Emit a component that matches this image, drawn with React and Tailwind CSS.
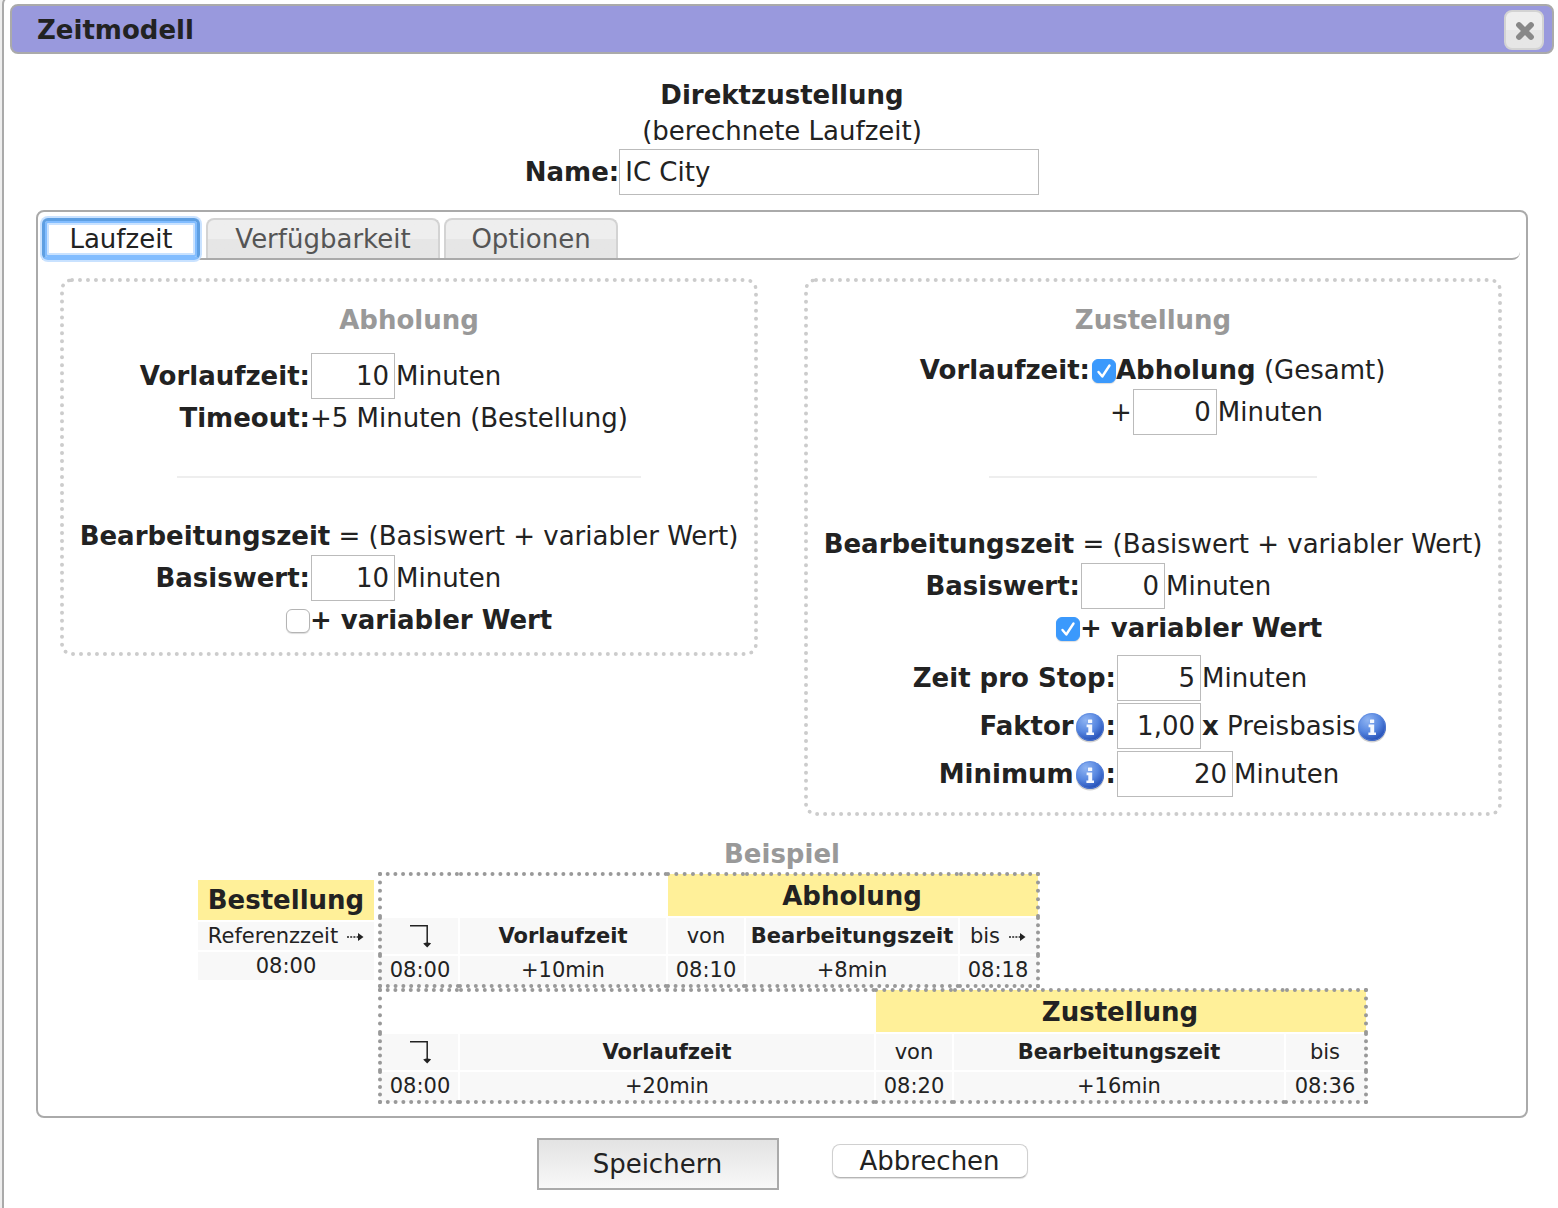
import { useId, useState } from 'react';

function InfoIcon({ label }) {
  const id = useId();
  return (
    <svg role="img" aria-label={label} viewBox="0 0 32 32" className="mt-0.5 inline-block size-8 shrink-0">
      <defs>
        <radialGradient id={id} cx="35%" cy="25%" r="80%">
          <stop offset="0" stopColor="#8fb4f2" />
          <stop offset="0.55" stopColor="#5686e0" />
          <stop offset="1" stopColor="#1f48b0" />
        </radialGradient>
      </defs>
      <ellipse cx="16" cy="18.5" rx="14" ry="13" fill="#000" opacity="0.18" />
      <circle cx="16" cy="16" r="14" fill={`url(#${id})`} />
      <circle cx="16" cy="16" r="13.4" fill="none" stroke="#5b87dd" strokeWidth="1" opacity="0.6" />
      <rect x="14" y="8.4" width="4.2" height="3.6" rx="0.6" fill="#f4f8ff" />
      <path d="M12.6 13.6h5.6v7.8h1.8v2.6h-7.6v-2.6h1.9v-5.2h-1.7z" fill="#f4f8ff" />
    </svg>
  );
}

function DashedArrow() {
  return (
    <svg aria-hidden="true" viewBox="0 0 18 12" className="ml-2 inline-block h-3 w-[18px]">
      <path d="M1 6h11" stroke="#222" strokeWidth="1.6" strokeDasharray="2 1.2" />
      <path d="M12 2l5.5 4-5.5 4z" fill="#222" />
    </svg>
  );
}

function ElbowArrow() {
  return (
    <svg aria-hidden="true" viewBox="0 0 22 24" className="mx-auto block h-6 w-[22px]">
      <path d="M1 1.7h17.2V19" fill="none" stroke="#222" strokeWidth="1.5" />
      <path d="M14.2 19.4q4-1.6 8 0L18.2 23.6z" fill="#222" />
    </svg>
  );
}

function Field({ label, value, className = 'w-[84px]' }) {
  return (
    <input
      type="text"
      aria-label={label}
      defaultValue={value}
      className={`mx-px h-[46px] shrink-0 border border-[#bbb] bg-white px-[5px] text-right text-[#222] ${className}`}
    />
  );
}

function Checkbox({ id, defaultChecked }) {
  return (
    <span className="relative mt-0.5 inline-block size-6 shrink-0">
      <input
        id={id}
        type="checkbox"
        defaultChecked={defaultChecked}
        className="peer block size-6 appearance-none rounded-[6px] border border-[#b4b4b4] bg-white shadow-[0_1px_1px_#ddd] checked:border-[#3b99fc] checked:bg-[#3b99fc]"
      />
      <svg viewBox="0 0 24 24" aria-hidden="true" className="pointer-events-none absolute inset-0 hidden size-6 peer-checked:block">
        <path d="M6.5 13l3.8 4.5L17.5 6.5" fill="none" stroke="#fff" strokeWidth="2.4" strokeLinecap="round" strokeLinejoin="round" />
      </svg>
    </span>
  );
}

function Group({ title, children }) {
  return (
    <section className="flex-1 rounded-xl border-4 border-dotted border-[#ccc] pt-5 whitespace-nowrap">
      <h2 className="text-center font-bold text-[#999]">{title}</h2>
      {children}
    </section>
  );
}

function Left({ children }) {
  return <div className="flex items-center justify-end font-bold">{children}</div>;
}

function Right({ children, className = '' }) {
  return <div className={`flex items-center ${className}`}>{children}</div>;
}

function Formula() {
  return (
    <p className="text-center">
      <b>Bearbeitungszeit</b> = (Basiswert + variabler Wert)
    </p>
  );
}

const cell = 'border-2 border-white bg-[#f8f8f8] p-0 text-center';

function Timeline({ className, widths, title, lead, start, end, work, arrow }) {
  return (
    <table className={`table-fixed border-collapse border-4 border-dotted border-[#999] text-[21px] leading-7 ${className}`}>
      <colgroup>
        {widths.map((w, i) => (
          <col key={i} className={w} />
        ))}
      </colgroup>
      <thead>
        <tr className="h-[43px]">
          <td colSpan={2} className="p-0" />
          <th colSpan={3} className="border-2 border-white bg-[#fff099] p-0 text-[26px]">{title}</th>
        </tr>
        <tr className="h-[38px]">
          <td className={cell}><ElbowArrow /></td>
          <th className={cell}>Vorlaufzeit</th>
          <td className={cell}>von</td>
          <th className={cell}>Bearbeitungszeit</th>
          <td className={cell}>bis{arrow && <DashedArrow />}</td>
        </tr>
      </thead>
      <tbody>
        <tr className="h-[31px]">
          <td className={cell}>08:00</td>
          <td className={cell}>{lead}</td>
          <td className={cell}>{start}</td>
          <td className={cell}>{work}</td>
          <td className={cell}>{end}</td>
        </tr>
      </tbody>
    </table>
  );
}

const tabs = [
  { name: 'Laufzeit', width: 'w-[158px]' },
  { name: 'Verfügbarkeit', width: 'w-[234px]' },
  { name: 'Optionen', width: 'w-[174px]' },
];

function Tabs() {
  const [active, setActive] = useState('Laufzeit');
  return (
    <div role="tablist" className="mx-1 mr-1.5 flex h-12 items-end gap-1 rounded-br-lg border-b-2 border-[#aaa]">
      {tabs.map(({ name, width }) => (
        <button
          key={name}
          type="button"
          role="tab"
          aria-selected={active === name}
          onClick={() => setActive(name)}
          className={`${width} ${
            active === name
              ? '-mb-0.5 mr-0.5 h-[42px] rounded-md border-[3px] border-[#5e9fe2] border-b-[#82bdff] bg-white text-[#222] shadow-[0_0_0_2px_#c9e2ff,inset_0_0_0_2px_#82bdff,inset_0_0_0_4px_#c9e2ff] outline-none'
              : 'h-10 rounded-t-lg border-2 border-b-0 border-[#d3d3d3] bg-linear-to-b from-[#eee] from-50% to-[#e6e6e6] to-50% text-[#555] outline-none'
          }`}
        >
          {name}
        </button>
      ))}
    </div>
  );
}

export default function App() {
  return (
    <div className="min-h-screen overflow-hidden bg-[#eee] font-['DejaVu_Sans',Verdana,sans-serif] text-[26px] leading-9 text-[#222]">
      <main className="-mt-1 -mr-1 -mb-3 ml-0.5 rounded-lg border-2 border-[#aaa] bg-white p-1.5 pb-[26px]">
        <header className="flex h-[50px] items-center justify-between rounded-lg border-2 border-[#aaa] bg-[#9999dd] pt-0.5 pr-2 pl-[25px]">
          <h1 className="font-bold">Zeitmodell</h1>
          <button type="button" aria-label="Schließen" className="grid size-10 place-items-center rounded-lg border-2 border-[#d3d3d3] bg-linear-to-b from-[#eee] from-50% to-[#e6e6e6] to-50%">
            <svg viewBox="0 0 20 20" aria-hidden="true" className="mt-0.5 ml-0.5 size-5">
              <path d="M4 4l12 12M16 4L4 16" stroke="#888" strokeWidth="5.8" strokeLinecap="round" />
            </svg>
          </button>
        </header>

        <div className="mt-[23px] text-center">
          <p className="font-bold">Direktzustellung</p>
          <p>(berechnete Laufzeit)</p>
          <div className="flex items-center justify-center">
            <label htmlFor="name" className="font-bold">Name:</label>
            <input id="name" type="text" defaultValue="IC City" className="h-[46px] w-[420px] border border-[#bbb] px-[5px]" />
          </div>
        </div>

        <div className="mx-[26px] mt-[15px] rounded-lg border-2 border-[#aaa] pb-3">
          <Tabs />

          <div className="mt-[18px] mr-6 ml-[22px] flex items-start gap-[46px]">
            <Group title="Abholung">
              <div className="mt-[15px] grid grid-cols-[246fr_444fr] gap-y-px">
                <Left>Vorlaufzeit:</Left>
                <Right><Field label="Vorlaufzeit Abholung" value="10" />Minuten</Right>
                <Left>Timeout:</Left>
                <Right>+5 Minuten (Bestellung)</Right>
              </div>
              <hr className="mx-auto my-10 w-[464px] border-t-2 border-[#eee]" />
              <Formula />
              <div className="mt-px mb-3.5 grid grid-cols-[246fr_444fr] gap-y-px">
                <Left>Basiswert:</Left>
                <Right><Field label="Basiswert Abholung" value="10" />Minuten</Right>
                <Left><Checkbox id="var-a" /></Left>
                <Right><label htmlFor="var-a" className="font-bold">+ variabler Wert</label></Right>
              </div>
            </Group>

            <Group title="Zustellung">
              <div className="mt-3.5 grid grid-cols-[282fr_408fr] gap-y-px">
                <Left>Vorlaufzeit:</Left>
                <Right className="pl-0.5">
                  <Checkbox id="total" defaultChecked />
                  <label htmlFor="total"><b>Abholung</b> (Gesamt)</label>
                </Right>
                <span />
                <Right className="pl-5">+<Field label="Vorlaufzeit Zustellung" value="0" />Minuten</Right>
              </div>
              <hr className="mx-auto mt-[41px] mb-12 w-[328px] border-t-2 border-[#eee]" />
              <Formula />
              <div className="mt-px grid grid-cols-[272fr_418fr] gap-y-px">
                <Left>Basiswert:</Left>
                <Right><Field label="Basiswert Zustellung" value="0" />Minuten</Right>
                <Left><Checkbox id="var-z" defaultChecked /></Left>
                <Right><label htmlFor="var-z" className="font-bold">+ variabler Wert</label></Right>
              </div>
              <div className="mt-[9px] mb-[15px] grid grid-cols-[308fr_382fr] gap-y-0.5">
                <Left>Zeit pro Stop:</Left>
                <Right><Field label="Zeit pro Stop" value="5" />Minuten</Right>
                <Left>Faktor<InfoIcon label="Info zum Faktor" />:</Left>
                <Right>
                  <Field label="Faktor" value="1,00" />
                  <span><b>x</b> Preisbasis</span>
                  <InfoIcon label="Info zur Preisbasis" />
                </Right>
                <Left>Minimum<InfoIcon label="Info zum Minimum" />:</Left>
                <Right><Field label="Minimum" value="20" className="w-[116px]" />Minuten</Right>
              </div>
            </Group>
          </div>

          <h2 className="mt-5 text-center font-bold text-[#999]">Beispiel</h2>
          <div className="flex items-start justify-center gap-1 pl-0.5 whitespace-nowrap">
            <table className="mt-2 w-[176px] border-separate border-spacing-0 text-[21px] leading-7">
              <thead>
                <tr><th className="h-10 bg-[#fff099] p-0 text-[26px]">Bestellung</th></tr>
              </thead>
              <tbody className="text-center">
                <tr><td className="h-[30px] border-t-2 border-white bg-[#f8f8f8] p-0">Referenzzeit<DashedArrow /></td></tr>
                <tr><td className="h-[30px] border-t-2 border-white bg-[#f8f8f8] p-0">08:00</td></tr>
              </tbody>
            </table>
            <div>
              <Timeline
                className="w-[662px]"
                widths={['w-[79px]', 'w-[208px]', 'w-[78px]', 'w-[214px]', 'w-[79px]']}
                title="Abholung" lead="+10min" start="08:10" work="+8min" end="08:18" arrow
              />
              <Timeline
                className="w-[990px]"
                widths={['w-[79px]', 'w-[416px]', 'w-[78px]', 'w-[332px]', 'w-[81px]']}
                title="Zustellung" lead="+20min" start="08:20" work="+16min" end="08:36"
              />
            </div>
          </div>
        </div>

        <div className="mt-5 flex items-start justify-center gap-[53px]">
          <button type="button" className="h-[52px] w-[242px] border-2 border-[#aaa] bg-linear-to-b from-[#e3e3e3] to-[#f8f8f8]">Speichern</button>
          <button type="button" className="mt-1.5 flex h-[34px] w-[196px] items-center justify-center rounded-lg border border-[#d0d0d0] border-b-[#b5b5b5] bg-white shadow-[0_1px_1px_#ddd]">Abbrechen</button>
        </div>
      </main>
    </div>
  );
}
